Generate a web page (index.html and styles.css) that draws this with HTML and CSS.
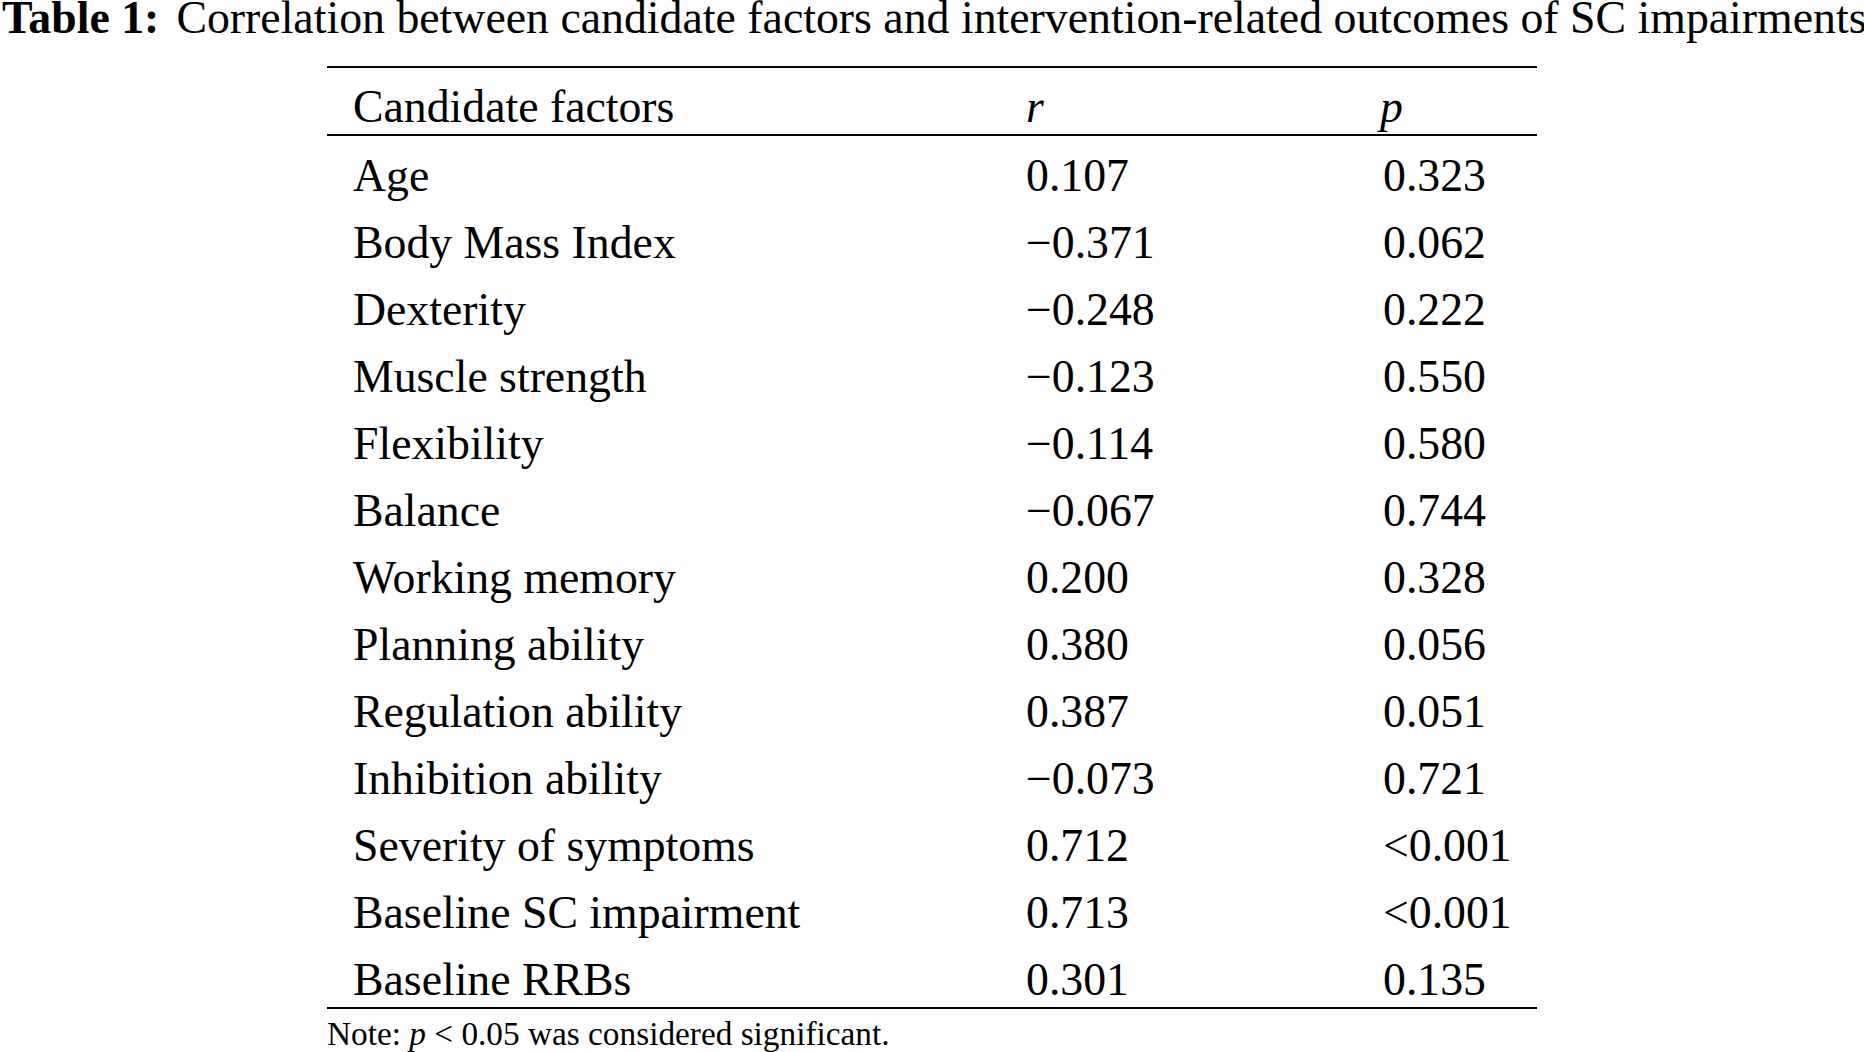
FILE: index.html
```html
<!DOCTYPE html>
<html lang="en">
<head>
<meta charset="utf-8">
<title>Table 1</title>
<link rel="stylesheet" href="styles.css">
</head>
<body>
<div class="caption"><span class="label">Table 1:</span><span class="caption-text">Correlation between candidate factors and intervention-related outcomes of SC impairments</span></div>
<table class="data">
  <thead>
    <tr><th class="c1">Candidate factors</th><th class="c2"><i>r</i></th><th class="c3"><i>p</i></th></tr>
  </thead>
  <tbody>
    <tr><td class="c1">Age</td><td class="c2">0.107</td><td class="c3">0.323</td></tr>
    <tr><td class="c1">Body Mass Index</td><td class="c2">−0.371</td><td class="c3">0.062</td></tr>
    <tr><td class="c1">Dexterity</td><td class="c2">−0.248</td><td class="c3">0.222</td></tr>
    <tr><td class="c1">Muscle strength</td><td class="c2">−0.123</td><td class="c3">0.550</td></tr>
    <tr><td class="c1">Flexibility</td><td class="c2">−0.114</td><td class="c3">0.580</td></tr>
    <tr><td class="c1">Balance</td><td class="c2">−0.067</td><td class="c3">0.744</td></tr>
    <tr><td class="c1">Working memory</td><td class="c2">0.200</td><td class="c3">0.328</td></tr>
    <tr><td class="c1">Planning ability</td><td class="c2">0.380</td><td class="c3">0.056</td></tr>
    <tr><td class="c1">Regulation ability</td><td class="c2">0.387</td><td class="c3">0.051</td></tr>
    <tr><td class="c1">Inhibition ability</td><td class="c2">−0.073</td><td class="c3">0.721</td></tr>
    <tr><td class="c1">Severity of symptoms</td><td class="c2">0.712</td><td class="c3">&lt;0.001</td></tr>
    <tr><td class="c1">Baseline SC impairment</td><td class="c2">0.713</td><td class="c3">&lt;0.001</td></tr>
    <tr class="last"><td class="c1">Baseline RRBs</td><td class="c2">0.301</td><td class="c3">0.135</td></tr>
  </tbody>
</table>
<div class="note">Note: <i>p</i> &lt; 0.05 was considered significant.</div>
</body>
</html>
```

FILE: styles.css
```css
html, body {
  margin: 0;
  padding: 0;
  background: #ffffff;
}

body {
  font-family: "Liberation Serif", "Times New Roman", serif;
  color: #000000;
  width: 1864px;
  height: 1052px;
  overflow: hidden;
}

.caption {
  font-size: 45.8px;
  line-height: 36px;
  height: 36px;
  padding-left: 2px;
  white-space: nowrap;
}

.caption .label {
  font-weight: bold;
  margin-right: 17px;
}

.data {
  margin: 30px 0 0 327px;
  width: 1210px;
  border-collapse: separate;
  border-spacing: 0;
  font-size: 45.75px;
  table-layout: fixed;
}

.data th,
.data td {
  font-weight: normal;
  text-align: left;
  line-height: 50px;
  white-space: nowrap;
  padding: 15px 0 2px 0;
}

.data th {
  padding-top: 14px;
  border-top: 2px solid #000;
  border-bottom: 2px solid #000;
}

.data .last td {
  border-bottom: 2px solid #000;
}

.data .c1 {
  width: 673px;
  padding-left: 26px;
}

.data .c2 {
  width: 357px;
}

.data .c3 {
  width: 154px;
}

.data th.c3 {
  text-indent: -3px;
}

.note {
  margin-left: 327px;
  font-size: 33.3px;
  line-height: 33px;
  margin-top: 8px;
}
```
